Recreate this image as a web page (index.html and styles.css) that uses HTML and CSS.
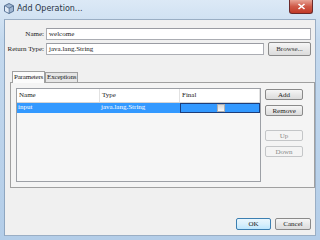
FILE: index.html
```html
<!DOCTYPE html>
<html lang="en">
  <head>
    <meta charset="UTF-8" />
    <title>Add Operation...</title>
    <link rel="stylesheet" href="styles.css">
  </head>
  <body>
    <div class="window">
      <div class="titlebar">
        <svg class="app-icon" width="10" height="11" viewBox="0 0 10 11">
          <path d="M5 0.5 L9.5 2.8 L9.5 8.2 L5 10.5 L0.5 8.2 L0.5 2.8 Z" fill="#9fb6d2" stroke="#3d5a80" stroke-width="0.8"/>
          <path d="M0.8 3 L5 5.2 L9.2 3" fill="none" stroke="#3d5a80" stroke-width="0.7"/>
          <path d="M5 5.2 L5 10.3" stroke="#3d5a80" stroke-width="0.7"/>
          <path d="M1 3.3 L4.6 5.4 L4.6 9.8 L1 7.9 Z" fill="#dfe9f5"/>
        </svg>
        <span class="title">Add Operation...</span>
        <div class="close">
          <svg width="9" height="7" viewBox="0 0 9 7">
            <path d="M1.5 1 L7.5 6 M7.5 1 L1.5 6" stroke="#fff" stroke-width="1.6"/>
          </svg>
        </div>
      </div>

      <div class="client">
        <div class="form">
          <div class="row">
            <span class="label">Name:</span>
            <div class="field">welcome</div>
          </div>
          <div class="row">
            <span class="label">Return Type:</span>
            <div class="field">java.lang.String</div>
            <div class="btn browse">Browse...</div>
          </div>
        </div>

        <div class="tabs">
          <div class="tabstrip">
            <span class="tab active">Parameters</span>
            <span class="tab">Exceptions</span>
          </div>
          <div class="panel">
            <div class="table">
              <div class="thead">
                <span class="col-name">Name</span>
                <span class="col-type">Type</span>
                <span class="col-final">Final</span>
              </div>
              <div class="trow selected">
                <span class="col-name">input</span>
                <span class="col-type">java.lang.String</span>
                <span class="col-final focus"><i class="check"></i></span>
              </div>
            </div>
            <div class="side">
              <div class="btn">Add</div>
              <div class="btn">Remove</div>
              <div class="btn disabled up">Up</div>
              <div class="btn disabled">Down</div>
            </div>
          </div>
        </div>

        <div class="footer">
          <div class="btn default ok">OK</div>
          <div class="btn cancel">Cancel</div>
        </div>
      </div>
    </div>
  </body>
</html>
```

FILE: styles.css
```css
body {
  margin: 0;
  font-family: "Liberation Serif", "DejaVu Serif", serif;
  font-size: 7px;
  color: #1a1a1a;
  background: #b8cfe6;
}
.window {
  width: 320px;
  height: 240px;
  display: flex;
  flex-direction: column;
  background: linear-gradient(#dce9f6, #c4d9ee 40px, #b3cde8);
  overflow: hidden;
}
.titlebar {
  height: 19px;
  display: flex;
  align-items: center;
  position: relative;
  padding-left: 4px;
}
.app-icon {
  margin-right: 3px;
  margin-top: -2px;
}
.title {
  font-family: "DejaVu Sans", sans-serif;
  font-size: 8px;
  color: #2a3646;
  margin-top: -2px;
}
.close {
  position: absolute;
  right: 7px;
  top: 0;
  width: 24px;
  height: 14px;
  border: 1px solid #6b2a2a;
  border-top: none;
  border-radius: 0 0 3px 3px;
  background: linear-gradient(#e8a496, #cf5a48 50%, #c23a28);
  display: flex;
  align-items: center;
  justify-content: center;
  box-sizing: border-box;
}
.client {
  flex: 1;
  margin: 0 4px 4px 4px;
  background: #f0f0f0;
  border: 1px solid #9aaec4;
  border-left-color: #8ea6c0;
  display: flex;
  flex-direction: column;
  padding: 8px 4px 5px 0;
}
.form {
  display: flex;
  flex-direction: column;
  gap: 2px;
}
.row {
  display: flex;
  align-items: center;
  gap: 2px;
  min-height: 12px;
}
.label {
  width: 39px;
  text-align: right;
  white-space: nowrap;
}
.field {
  flex: 1;
  height: 12px;
  line-height: 11px;
  box-sizing: border-box;
  border: 1px solid #abadb3;
  border-top-color: #9a9ca3;
  background: #fff;
  padding-left: 2px;
}
.btn {
  height: 11px;
  line-height: 10px;
  box-sizing: border-box;
  border: 1px solid #8a8a8a;
  border-radius: 2px;
  background: linear-gradient(#f6f6f6, #e8e8e8 50%, #dcdcdc);
  text-align: center;
  color: #222;
}
.btn.browse {
  width: 43px;
  height: 14px;
  line-height: 12px;
  margin-left: 2px;
  color: #333;
}
.btn.disabled {
  border-color: #c4c6c8;
  background: #f4f4f4;
  color: #8a8a8a;
}
.btn.default {
  border-color: #3c7fb1;
  background: linear-gradient(#eaf6fd, #d9f0fc 50%, #bee6fd);
}
.tabs {
  margin: 15px -4px 0 5px;
  display: flex;
  flex-direction: column;
}
.tabstrip {
  display: flex;
  align-items: flex-end;
  height: 11px;
  padding-left: 2px;
}
.tab {
  height: 9px;
  line-height: 9px;
  padding: 0 1px;
  border: 1px solid #a0a0a0;
  border-bottom: none;
  background: #e6e6e6;
  letter-spacing: -0.2px;
}
.tab.active {
  height: 11px;
  line-height: 11px;
  background: #fbfbfb;
  margin-bottom: -1px;
  position: relative;
  z-index: 1;
}
.panel {
  height: 106px;
  box-sizing: border-box;
  border: 1px solid #a0a0a0;
  background: #f4f4f4;
  display: flex;
  gap: 4px;
  padding: 5px 11px 5px 5px;
}
.table {
  width: 246px;
  box-sizing: border-box;
  border: 1px solid #9da0a6;
  background: #f6f6f6;
}
.thead,
.trow {
  display: flex;
}
.thead {
  height: 13px;
  line-height: 12px;
  background: #fff;
  border-bottom: 1px solid #d5d5d5;
}
.thead span {
  border-right: 1px solid #e2e2e2;
  box-sizing: border-box;
  padding-left: 2px;
}
.trow {
  height: 10px;
  line-height: 9px;
}
.trow span {
  box-sizing: border-box;
  padding-left: 1px;
}
.trow.selected {
  background: #3399ff;
  color: #fff;
}
.col-name {
  width: 83px;
}
.col-type {
  width: 80px;
}
.col-final {
  flex: 1;
}
.col-final.focus {
  border: 1px solid #1c3d7a;
  display: flex;
  align-items: center;
  justify-content: center;
}
.check {
  width: 6px;
  height: 6px;
  border: 1px solid #b0b0b0;
  background: linear-gradient(#d8d8d8, #f6f6f6);
}
.side {
  width: 38px;
  display: flex;
  flex-direction: column;
  gap: 5px;
  padding-top: 1px;
}
.side .btn.up {
  margin-top: 9px;
}
.footer {
  margin-top: auto;
  display: flex;
  justify-content: flex-end;
  gap: 4px;
}
.footer .btn {
  height: 12px;
  line-height: 11px;
}
.btn.ok {
  width: 35px;
}
.btn.cancel {
  width: 36px;
}
```
